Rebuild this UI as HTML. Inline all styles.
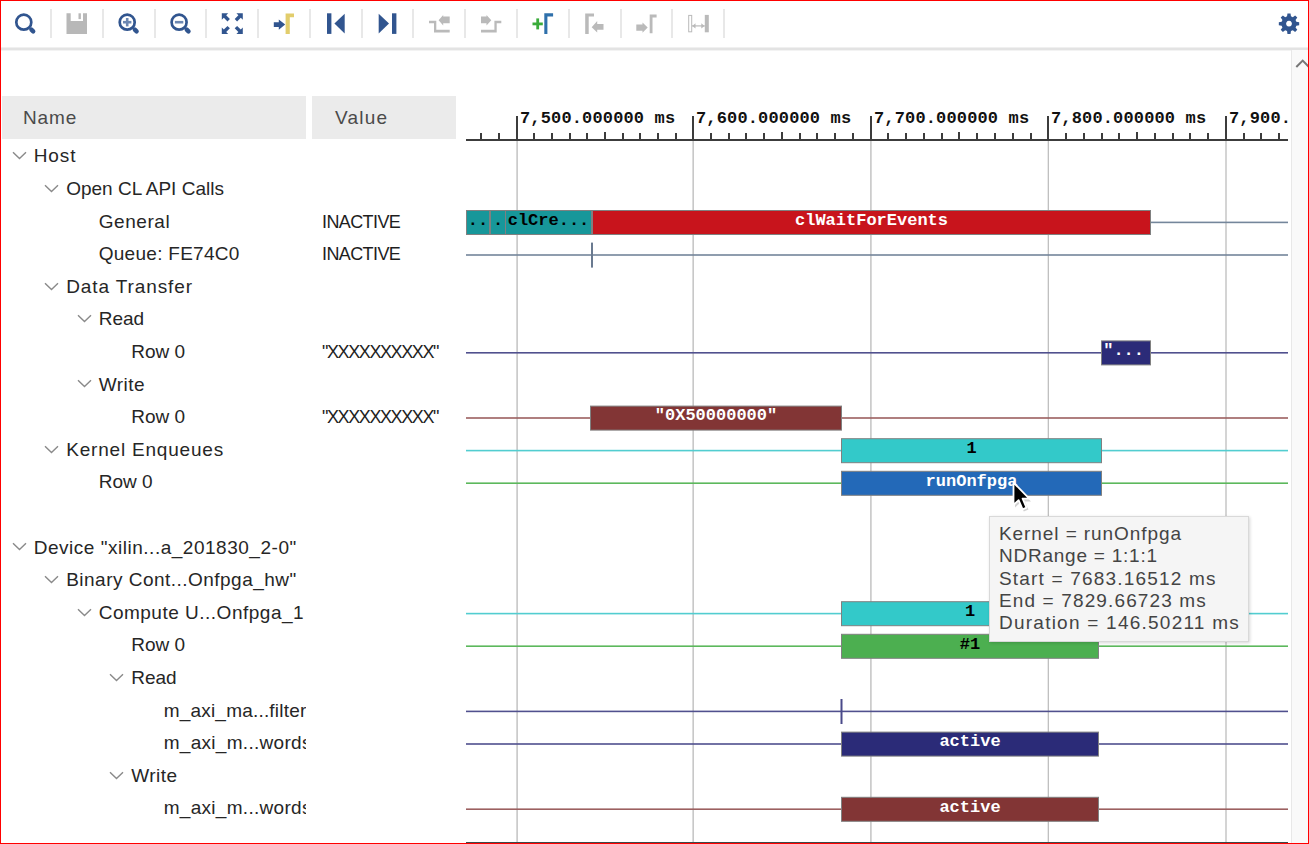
<!DOCTYPE html>
<html><head><meta charset="utf-8">
<style>
html,body{margin:0;padding:0;}
body{width:1309px;height:844px;position:relative;overflow:hidden;background:#fff;font-family:"Liberation Sans",sans-serif;}
.a{position:absolute;}
.lbl{position:absolute;font-size:19px;line-height:22px;color:#262626;white-space:nowrap;}
.val{position:absolute;font-size:18px;line-height:22px;color:#1e1e1e;white-space:nowrap;}
.sep{position:absolute;top:9px;width:2px;height:29px;background:#e8e8e8;}
.frame{position:absolute;background:#ff0000;}
.tt{position:absolute;font-size:19px;line-height:22.2px;color:#444;white-space:nowrap;}
</style></head><body>

<div class="sep" style="left:50px"></div>
<div class="sep" style="left:102px"></div>
<div class="sep" style="left:154px"></div>
<div class="sep" style="left:205px"></div>
<div class="sep" style="left:257px"></div>
<div class="sep" style="left:309px"></div>
<div class="sep" style="left:361px"></div>
<div class="sep" style="left:412px"></div>
<div class="sep" style="left:464px"></div>
<div class="sep" style="left:516px"></div>
<div class="sep" style="left:568px"></div>
<div class="sep" style="left:620px"></div>
<div class="sep" style="left:671px"></div>
<div class="sep" style="left:723px"></div>
<div class="a" style="left:1px;top:47px;width:1307px;height:1px;background:#f0f0f0"></div><div class="a" style="left:1px;top:48px;width:1307px;height:2px;background:#e3e3e3"></div><div class="a" style="left:1px;top:50px;width:1307px;height:1px;background:#f3f3f3"></div>

<svg class="a" style="left:0;top:0" width="740" height="46" viewBox="0 0 740 46">
 <!-- search -->
 <circle cx="23.8" cy="22.2" r="7.5" fill="none" stroke="#31558f" stroke-width="2.7"/>
 <line x1="31.40" y1="29.6" x2="33.20" y2="31.4" stroke="#31558f" stroke-width="4.4" stroke-linecap="round"/>
 <!-- save -->
 <path d="M66.5 13.3 H70.7 V21 H83 V13.3 H87 V33.9 H66.5 Z" fill="#b8b8b8"/>
 <rect x="78.5" y="13.3" width="2.4" height="5.8" fill="#b8b8b8"/>
 <!-- zoom in -->
 <circle cx="127.2" cy="22.2" r="7.5" fill="none" stroke="#31558f" stroke-width="2.7"/>
 <line x1="134.80" y1="29.6" x2="136.60" y2="31.4" stroke="#31558f" stroke-width="4.4" stroke-linecap="round"/>
 <rect x="123" y="20.9" width="8.4" height="2.6" fill="#6c87b2"/>
 <rect x="125.9" y="18" width="2.6" height="8.4" fill="#6c87b2"/>
 <!-- zoom out -->
 <circle cx="179.1" cy="22.2" r="7.5" fill="none" stroke="#31558f" stroke-width="2.7"/>
 <line x1="186.70" y1="29.6" x2="188.50" y2="31.4" stroke="#31558f" stroke-width="4.4" stroke-linecap="round"/>
 <rect x="174.9" y="20.9" width="8.4" height="2.6" fill="#6c87b2"/>
 <!-- fit -->
<path d="M221.80 13.30 L228.20 13.30 L226.20 15.30 L229.90 19.00 L227.50 21.40 L223.80 17.70 L221.80 19.70 Z" fill="#31558f"/>
<path d="M242.80 13.30 L236.40 13.30 L238.40 15.30 L234.70 19.00 L237.10 21.40 L240.80 17.70 L242.80 19.70 Z" fill="#31558f"/>
<path d="M221.80 34.00 L228.20 34.00 L226.20 32.00 L229.90 28.30 L227.50 25.90 L223.80 29.60 L221.80 27.60 Z" fill="#31558f"/>
<path d="M242.80 34.00 L236.40 34.00 L238.40 32.00 L234.70 28.30 L237.10 25.90 L240.80 29.60 L242.80 27.60 Z" fill="#31558f"/>
 <!-- cursor to marker -->
 <path d="M273.8 22.2 H278.8 V19.5 L285.2 24.6 L278.8 29.8 V27.1 H273.8 Z" fill="#31558f"/>
 <path d="M285.6 13.4 H294 V17.2 H289.8 V34 H285.6 Z" fill="#e2cd6c"/>
 <!-- go first -->
 <rect x="327" y="13.3" width="4.4" height="20.6" fill="#31558f"/>
 <path d="M344.7 13.8 V33.4 L334.4 23.4 Z" fill="#31558f"/>
 <!-- go last -->
 <rect x="392" y="13.3" width="4.4" height="20.6" fill="#31558f"/>
 <path d="M378.7 13.8 V33.4 L389 23.4 Z" fill="#31558f"/>
 <!-- prev transition -->
 <path d="M429 20.7 H436.3 V29.8 H449.7 V32.5 H434 V23.3 H429 Z" fill="#bababa"/>
 <path d="M438.6 20.3 L443.2 14.9 V16.5 H449.7 V23.3 H443.2 V25.6 Z" fill="#bababa"/>
 <!-- next transition -->
 <path d="M501.3 20.7 H494.4 V29.8 H481 V32.5 H496.7 V23.3 H501.3 Z" fill="#bababa"/>
 <path d="M491.3 20.3 L486.5 14.9 V16.5 H481 V23.3 H486.5 V25.6 Z" fill="#bababa"/>
 <!-- add marker -->
 <rect x="532.5" y="22.5" width="10.3" height="2.8" fill="#3aab3a"/>
 <rect x="536.3" y="18.4" width="2.8" height="11" fill="#3aab3a"/>
 <path d="M544.3 13.3 H553.1 V16.5 H547.4 V34 H544.3 Z" fill="#2f70ab"/>
 <!-- prev marker -->
 <path d="M585.2 13.6 H594 V16.6 H588.7 V34 H585.2 Z" fill="#bababa"/>
 <path d="M591.7 27.2 L597.2 21 V24.1 H603.5 V29.8 H597.2 V32.5 Z" fill="#bababa"/>
 <!-- next marker -->
 <path d="M649.7 14.4 H656.6 V17.4 H652.5 V33.3 H649.7 Z" fill="#bababa"/>
 <path d="M647.7 27.6 L642.5 22.4 V24.4 H636.3 V30.8 H642.5 V32.8 Z" fill="#bababa"/>
 <!-- swap cursors -->
 <rect x="688.7" y="15.4" width="3" height="16.4" fill="none" stroke="#bababa" stroke-width="1"/>
 <rect x="704.8" y="14.9" width="4" height="17.4" fill="#bababa"/>
 <rect x="692" y="25.3" width="12.8" height="1.2" fill="#bababa"/>
 <path d="M692.3 25.9 L695.5 23.2 V28.6 Z M704.5 25.9 L701.3 23.2 V28.6 Z" fill="#bababa"/>
</svg>

<svg class="a" style="left:0;top:0" width="1309" height="46"><path d="M1287.05 16.36 L1287.46 13.52 L1290.54 13.52 L1290.95 16.36 L1292.81 17.13 L1295.11 15.41 L1297.29 17.59 L1295.57 19.89 L1296.34 21.75 L1299.18 22.16 L1299.18 25.24 L1296.34 25.65 L1295.57 27.51 L1297.29 29.81 L1295.11 31.99 L1292.81 30.27 L1290.95 31.04 L1290.54 33.88 L1287.46 33.88 L1287.05 31.04 L1285.19 30.27 L1282.89 31.99 L1280.71 29.81 L1282.43 27.51 L1281.66 25.65 L1278.82 25.24 L1278.82 22.16 L1281.66 21.75 L1282.43 19.89 L1280.71 17.59 L1282.89 15.41 L1285.19 17.13 Z M1289.00 20.80 a2.9 2.9 0 1 0 0.01 0 Z" fill="#31558f" fill-rule="evenodd"/></svg>
<div class="a" style="left:2px;top:96px;width:304px;height:43px;background:#ebebeb"></div>
<div class="a" style="left:312px;top:96px;width:144px;height:43px;background:#ebebeb"></div>
<div class="lbl" style="left:23px;top:107.3px;color:#4a4a4a;letter-spacing:0.9px">Name</div>
<div class="lbl" style="left:335px;top:107.3px;color:#4a4a4a;letter-spacing:1.2px">Value</div>
<div class="a" style="left:0;top:140px;width:306px;height:704px;overflow:hidden">
<svg class="a" style="left:11.7px;top:11.1px" width="16" height="10"><path d="M1 1.2 L7.5 7.6 L14 1.2" fill="none" stroke="#8a8a8a" stroke-width="1.4"/></svg>
<div class="lbl" style="left:33.7px;top:5.4px;letter-spacing:0.90px">Host</div>
<svg class="a" style="left:44.2px;top:43.7px" width="16" height="10"><path d="M1 1.2 L7.5 7.6 L14 1.2" fill="none" stroke="#8a8a8a" stroke-width="1.4"/></svg>
<div class="lbl" style="left:66.2px;top:38.0px;letter-spacing:0.00px">Open CL API Calls</div>
<div class="lbl" style="left:98.7px;top:70.6px;letter-spacing:0.57px">General</div>
<div class="lbl" style="left:98.7px;top:103.2px;letter-spacing:0.28px">Queue: FE74C0</div>
<svg class="a" style="left:44.2px;top:141.5px" width="16" height="10"><path d="M1 1.2 L7.5 7.6 L14 1.2" fill="none" stroke="#8a8a8a" stroke-width="1.4"/></svg>
<div class="lbl" style="left:66.2px;top:135.8px;letter-spacing:0.90px">Data Transfer</div>
<svg class="a" style="left:76.7px;top:174.1px" width="16" height="10"><path d="M1 1.2 L7.5 7.6 L14 1.2" fill="none" stroke="#8a8a8a" stroke-width="1.4"/></svg>
<div class="lbl" style="left:98.7px;top:168.4px;letter-spacing:0.00px">Read</div>
<div class="lbl" style="left:131.2px;top:201.0px;letter-spacing:0.00px">Row 0</div>
<svg class="a" style="left:76.7px;top:239.3px" width="16" height="10"><path d="M1 1.2 L7.5 7.6 L14 1.2" fill="none" stroke="#8a8a8a" stroke-width="1.4"/></svg>
<div class="lbl" style="left:98.7px;top:233.6px;letter-spacing:0.50px">Write</div>
<div class="lbl" style="left:131.2px;top:266.2px;letter-spacing:0.00px">Row 0</div>
<svg class="a" style="left:44.2px;top:304.5px" width="16" height="10"><path d="M1 1.2 L7.5 7.6 L14 1.2" fill="none" stroke="#8a8a8a" stroke-width="1.4"/></svg>
<div class="lbl" style="left:66.2px;top:298.8px;letter-spacing:0.80px">Kernel Enqueues</div>
<div class="lbl" style="left:98.7px;top:331.4px;letter-spacing:0.00px">Row 0</div>
<svg class="a" style="left:11.7px;top:402.3px" width="16" height="10"><path d="M1 1.2 L7.5 7.6 L14 1.2" fill="none" stroke="#8a8a8a" stroke-width="1.4"/></svg>
<div class="lbl" style="left:33.7px;top:396.6px;letter-spacing:0.52px">Device &quot;xilin...a_201830_2-0&quot;</div>
<svg class="a" style="left:44.2px;top:434.9px" width="16" height="10"><path d="M1 1.2 L7.5 7.6 L14 1.2" fill="none" stroke="#8a8a8a" stroke-width="1.4"/></svg>
<div class="lbl" style="left:66.2px;top:429.2px;letter-spacing:0.48px">Binary Cont...Onfpga_hw&quot;</div>
<svg class="a" style="left:76.7px;top:467.5px" width="16" height="10"><path d="M1 1.2 L7.5 7.6 L14 1.2" fill="none" stroke="#8a8a8a" stroke-width="1.4"/></svg>
<div class="lbl" style="left:98.7px;top:461.8px;letter-spacing:0.50px">Compute U...Onfpga_1</div>
<div class="lbl" style="left:131.2px;top:494.4px;letter-spacing:0.00px">Row 0</div>
<svg class="a" style="left:109.2px;top:532.7px" width="16" height="10"><path d="M1 1.2 L7.5 7.6 L14 1.2" fill="none" stroke="#8a8a8a" stroke-width="1.4"/></svg>
<div class="lbl" style="left:131.2px;top:527.0px;letter-spacing:0.00px">Read</div>
<div class="lbl" style="left:163.7px;top:559.6px;letter-spacing:0.20px">m_axi_ma...filter</div>
<div class="lbl" style="left:163.7px;top:592.2px;letter-spacing:0.30px">m_axi_m...words</div>
<svg class="a" style="left:109.2px;top:630.5px" width="16" height="10"><path d="M1 1.2 L7.5 7.6 L14 1.2" fill="none" stroke="#8a8a8a" stroke-width="1.4"/></svg>
<div class="lbl" style="left:131.2px;top:624.8px;letter-spacing:0.50px">Write</div>
<div class="lbl" style="left:163.7px;top:657.4px;letter-spacing:0.30px">m_axi_m...words</div>
</div>
<div class="val" style="left:322px;top:210.6px;letter-spacing:-0.60px">INACTIVE</div>
<div class="val" style="left:322px;top:243.2px;letter-spacing:-0.60px">INACTIVE</div>
<div class="val" style="left:322px;top:341.0px;letter-spacing:-1.40px">&quot;XXXXXXXXXX&quot;</div>
<div class="val" style="left:322px;top:406.2px;letter-spacing:-1.40px">&quot;XXXXXXXXXX&quot;</div>
<svg class="a" style="left:0;top:0" width="1309" height="844">
<rect x="516" y="141" width="1" height="702" fill="#d8d8d8"/>
<rect x="517" y="141" width="1" height="702" fill="#cbcbcb"/>
<rect x="692" y="141" width="1" height="702" fill="#dcdcdc"/>
<rect x="693" y="141" width="1" height="702" fill="#c8c8c8"/>
<rect x="870" y="141" width="1" height="702" fill="#cccccc"/>
<rect x="871" y="141" width="1" height="702" fill="#d8d8d8"/>
<rect x="1047" y="141" width="1" height="702" fill="#eaeaea"/>
<rect x="1048" y="141" width="1" height="702" fill="#c0c0c0"/>
<rect x="1225" y="141" width="1" height="702" fill="#d4d4d4"/>
<rect x="1226" y="141" width="1" height="702" fill="#d4d4d4"/>
<rect x="466" y="139" width="822" height="2" fill="#3c3c3c"/>
<rect x="480" y="133" width="2" height="7" fill="#3c3c3c"/>
<rect x="498" y="133" width="2" height="7" fill="#3c3c3c"/>
<rect x="516" y="116" width="2" height="24" fill="#3c3c3c"/>
<rect x="533" y="133" width="2" height="7" fill="#3c3c3c"/>
<rect x="551" y="133" width="2" height="7" fill="#3c3c3c"/>
<rect x="569" y="133" width="2" height="7" fill="#3c3c3c"/>
<rect x="586" y="133" width="2" height="7" fill="#3c3c3c"/>
<rect x="604" y="132" width="2" height="8" fill="#3c3c3c"/>
<rect x="622" y="133" width="2" height="7" fill="#3c3c3c"/>
<rect x="639" y="133" width="2" height="7" fill="#3c3c3c"/>
<rect x="657" y="133" width="2" height="7" fill="#3c3c3c"/>
<rect x="675" y="133" width="2" height="7" fill="#3c3c3c"/>
<rect x="692" y="116" width="2" height="24" fill="#3c3c3c"/>
<rect x="710" y="133" width="2" height="7" fill="#3c3c3c"/>
<rect x="728" y="133" width="2" height="7" fill="#3c3c3c"/>
<rect x="745" y="133" width="2" height="7" fill="#3c3c3c"/>
<rect x="763" y="133" width="2" height="7" fill="#3c3c3c"/>
<rect x="781" y="132" width="2" height="8" fill="#3c3c3c"/>
<rect x="799" y="133" width="2" height="7" fill="#3c3c3c"/>
<rect x="816" y="133" width="2" height="7" fill="#3c3c3c"/>
<rect x="834" y="133" width="2" height="7" fill="#3c3c3c"/>
<rect x="852" y="133" width="2" height="7" fill="#3c3c3c"/>
<rect x="870" y="116" width="2" height="24" fill="#3c3c3c"/>
<rect x="887" y="133" width="2" height="7" fill="#3c3c3c"/>
<rect x="905" y="133" width="2" height="7" fill="#3c3c3c"/>
<rect x="923" y="133" width="2" height="7" fill="#3c3c3c"/>
<rect x="941" y="133" width="2" height="7" fill="#3c3c3c"/>
<rect x="958" y="132" width="2" height="8" fill="#3c3c3c"/>
<rect x="976" y="133" width="2" height="7" fill="#3c3c3c"/>
<rect x="994" y="133" width="2" height="7" fill="#3c3c3c"/>
<rect x="1012" y="133" width="2" height="7" fill="#3c3c3c"/>
<rect x="1030" y="133" width="2" height="7" fill="#3c3c3c"/>
<rect x="1047" y="116" width="2" height="24" fill="#3c3c3c"/>
<rect x="1065" y="133" width="2" height="7" fill="#3c3c3c"/>
<rect x="1083" y="133" width="2" height="7" fill="#3c3c3c"/>
<rect x="1101" y="133" width="2" height="7" fill="#3c3c3c"/>
<rect x="1118" y="133" width="2" height="7" fill="#3c3c3c"/>
<rect x="1136" y="132" width="2" height="8" fill="#3c3c3c"/>
<rect x="1154" y="133" width="2" height="7" fill="#3c3c3c"/>
<rect x="1172" y="133" width="2" height="7" fill="#3c3c3c"/>
<rect x="1189" y="133" width="2" height="7" fill="#3c3c3c"/>
<rect x="1207" y="133" width="2" height="7" fill="#3c3c3c"/>
<rect x="1225" y="116" width="2" height="24" fill="#3c3c3c"/>
<rect x="1243" y="133" width="2" height="7" fill="#3c3c3c"/>
<rect x="1260" y="133" width="2" height="7" fill="#3c3c3c"/>
<rect x="1278" y="133" width="2" height="7" fill="#3c3c3c"/>
<text x="520" y="123" font-family="Liberation Mono" font-weight="bold" font-size="17" letter-spacing="0.15" fill="#111">7,500.000000 ms</text>
<text x="696" y="123" font-family="Liberation Mono" font-weight="bold" font-size="17" letter-spacing="0.15" fill="#111">7,600.000000 ms</text>
<text x="874" y="123" font-family="Liberation Mono" font-weight="bold" font-size="17" letter-spacing="0.15" fill="#111">7,700.000000 ms</text>
<text x="1051" y="123" font-family="Liberation Mono" font-weight="bold" font-size="17" letter-spacing="0.15" fill="#111">7,800.000000 ms</text>
<text x="1229" y="123" font-family="Liberation Mono" font-weight="bold" font-size="17" letter-spacing="0.15" fill="#111">7,900.</text>
<rect x="466.0" y="221.60" width="822.0" height="1.6" fill="#74869b"/>
<rect x="466.5" y="210.5" width="23.0" height="24" fill="#17979a" stroke="#808080" stroke-width="1"/>
<text x="478.0" y="224.8" text-anchor="middle" font-family="Liberation Mono" font-weight="bold" font-size="17" fill="#000">..</text>
<rect x="490.5" y="210.5" width="15.0" height="24" fill="#17979a" stroke="#808080" stroke-width="1"/>
<text x="498.0" y="224.8" text-anchor="middle" font-family="Liberation Mono" font-weight="bold" font-size="17" fill="#000">.</text>
<rect x="505.5" y="210.5" width="86.0" height="24" fill="#17979a" stroke="#808080" stroke-width="1"/>
<text x="548.5" y="224.8" text-anchor="middle" font-family="Liberation Mono" font-weight="bold" font-size="17" fill="#000">clCre...</text>
<rect x="592.5" y="210.5" width="558.0" height="24" fill="#c8141c" stroke="#808080" stroke-width="1"/>
<text x="871.5" y="224.8" text-anchor="middle" font-family="Liberation Mono" font-weight="bold" font-size="17" fill="#fff">clWaitForEvents</text>
<rect x="466.0" y="254.20" width="822.0" height="1.6" fill="#74869b"/>
<rect x="591.0" y="242.6" width="2" height="25" fill="#6a7a90"/>
<rect x="466.0" y="352.00" width="822.0" height="1.6" fill="#50508e"/>
<rect x="1101.5" y="340.9" width="49.0" height="24" fill="#2b2b78" stroke="#808080" stroke-width="1"/>
<text x="1123.6" y="355.2" text-anchor="middle" font-family="Liberation Mono" font-weight="bold" font-size="17" fill="#fff">&quot;...</text>
<rect x="466.0" y="417.20" width="822.0" height="1.6" fill="#9c6060"/>
<rect x="590.5" y="406.1" width="251.0" height="24" fill="#823535" stroke="#808080" stroke-width="1"/>
<text x="716.0" y="420.4" text-anchor="middle" font-family="Liberation Mono" font-weight="bold" font-size="17" fill="#fff">&quot;0X50000000&quot;</text>
<rect x="466.0" y="449.80" width="822.0" height="1.6" fill="#52cdd0"/>
<rect x="841.5" y="438.7" width="260.0" height="24" fill="#33c9c9" stroke="#808080" stroke-width="1"/>
<text x="971.5" y="453.0" text-anchor="middle" font-family="Liberation Mono" font-weight="bold" font-size="17" fill="#000">1</text>
<rect x="466.0" y="482.40" width="822.0" height="1.6" fill="#5cb85c"/>
<rect x="841.5" y="471.3" width="260.0" height="24" fill="#2369b8" stroke="#808080" stroke-width="1"/>
<text x="971.5" y="485.6" text-anchor="middle" font-family="Liberation Mono" font-weight="bold" font-size="17" fill="#fff">runOnfpga</text>
<rect x="466.0" y="612.80" width="822.0" height="1.6" fill="#52cdd0"/>
<rect x="841.5" y="601.7" width="257.0" height="24" fill="#33c9c9" stroke="#808080" stroke-width="1"/>
<text x="970.0" y="616.0" text-anchor="middle" font-family="Liberation Mono" font-weight="bold" font-size="17" fill="#000">1</text>
<rect x="466.0" y="645.40" width="822.0" height="1.6" fill="#5cb85c"/>
<rect x="841.5" y="634.3" width="257.0" height="24" fill="#4caf50" stroke="#808080" stroke-width="1"/>
<text x="970.0" y="648.6" text-anchor="middle" font-family="Liberation Mono" font-weight="bold" font-size="17" fill="#000">#1</text>
<rect x="466.0" y="710.60" width="822.0" height="1.6" fill="#50508e"/>
<rect x="840.5" y="699.0" width="2" height="25" fill="#4a4a8a"/>
<rect x="466.0" y="743.20" width="822.0" height="1.6" fill="#50508e"/>
<rect x="841.5" y="732.1" width="257.0" height="24" fill="#2b2b78" stroke="#808080" stroke-width="1"/>
<text x="970.0" y="746.4" text-anchor="middle" font-family="Liberation Mono" font-weight="bold" font-size="17" fill="#fff">active</text>
<rect x="466.0" y="808.40" width="822.0" height="1.6" fill="#9c6060"/>
<rect x="841.5" y="797.3" width="257.0" height="24" fill="#823535" stroke="#808080" stroke-width="1"/>
<text x="970.0" y="811.6" text-anchor="middle" font-family="Liberation Mono" font-weight="bold" font-size="17" fill="#fff">active</text>
<rect x="466" y="842" width="822" height="1" fill="#3c4a4a"/>
</svg>
<div class="a" style="left:1291px;top:50px;width:17px;height:794px;background:#f9f9f9;border-left:1px solid #e8e8e8;box-sizing:border-box"></div>
<svg class="a" style="left:1291px;top:55px" width="17" height="16"><path d="M5.3 12 L11.7 5.6 L18 12" fill="none" stroke="#777" stroke-width="2"/></svg>
<div class="a" style="left:989px;top:516px;width:260px;height:126px;background:#f5f5f5;border:1px solid #d9d9d9;box-sizing:border-box;box-shadow:1px 1px 3px rgba(0,0,0,0.16)"></div>
<div class="tt" style="left:999px;top:523.1px;letter-spacing:0.92px">Kernel = runOnfpga</div>
<div class="tt" style="left:999px;top:545.3px;letter-spacing:0.76px">NDRange = 1:1:1</div>
<div class="tt" style="left:999px;top:567.5px;letter-spacing:1.19px">Start = 7683.16512 ms</div>
<div class="tt" style="left:999px;top:589.7px;letter-spacing:1.13px">End = 7829.66723 ms</div>
<div class="tt" style="left:999px;top:611.9px;letter-spacing:1.24px">Duration = 146.50211 ms</div>
<svg class="a" style="left:1011px;top:480px" width="26" height="36"><path d="M4 5 L4 27.5 L9 23 L12.8 31.5 L17.5 29.5 L13.8 21.5 L20 21.5 Z" fill="rgba(0,0,0,0.18)"/><path d="M2.5 2.5 L2.5 25 L7.6 20.2 L11.6 29.3 L15.5 27.6 L11.6 18.6 L18.2 18.6 Z" fill="#000" stroke="#fff" stroke-width="1.8" stroke-linejoin="round"/></svg>
<div class="frame" style="left:0;top:0;width:1309px;height:1px"></div>
<div class="frame" style="left:0;top:0;width:1px;height:844px"></div>
<div class="frame" style="left:1308px;top:0;width:1px;height:844px"></div>
<div class="frame" style="left:0;top:843px;width:1309px;height:1px"></div>
</body></html>
